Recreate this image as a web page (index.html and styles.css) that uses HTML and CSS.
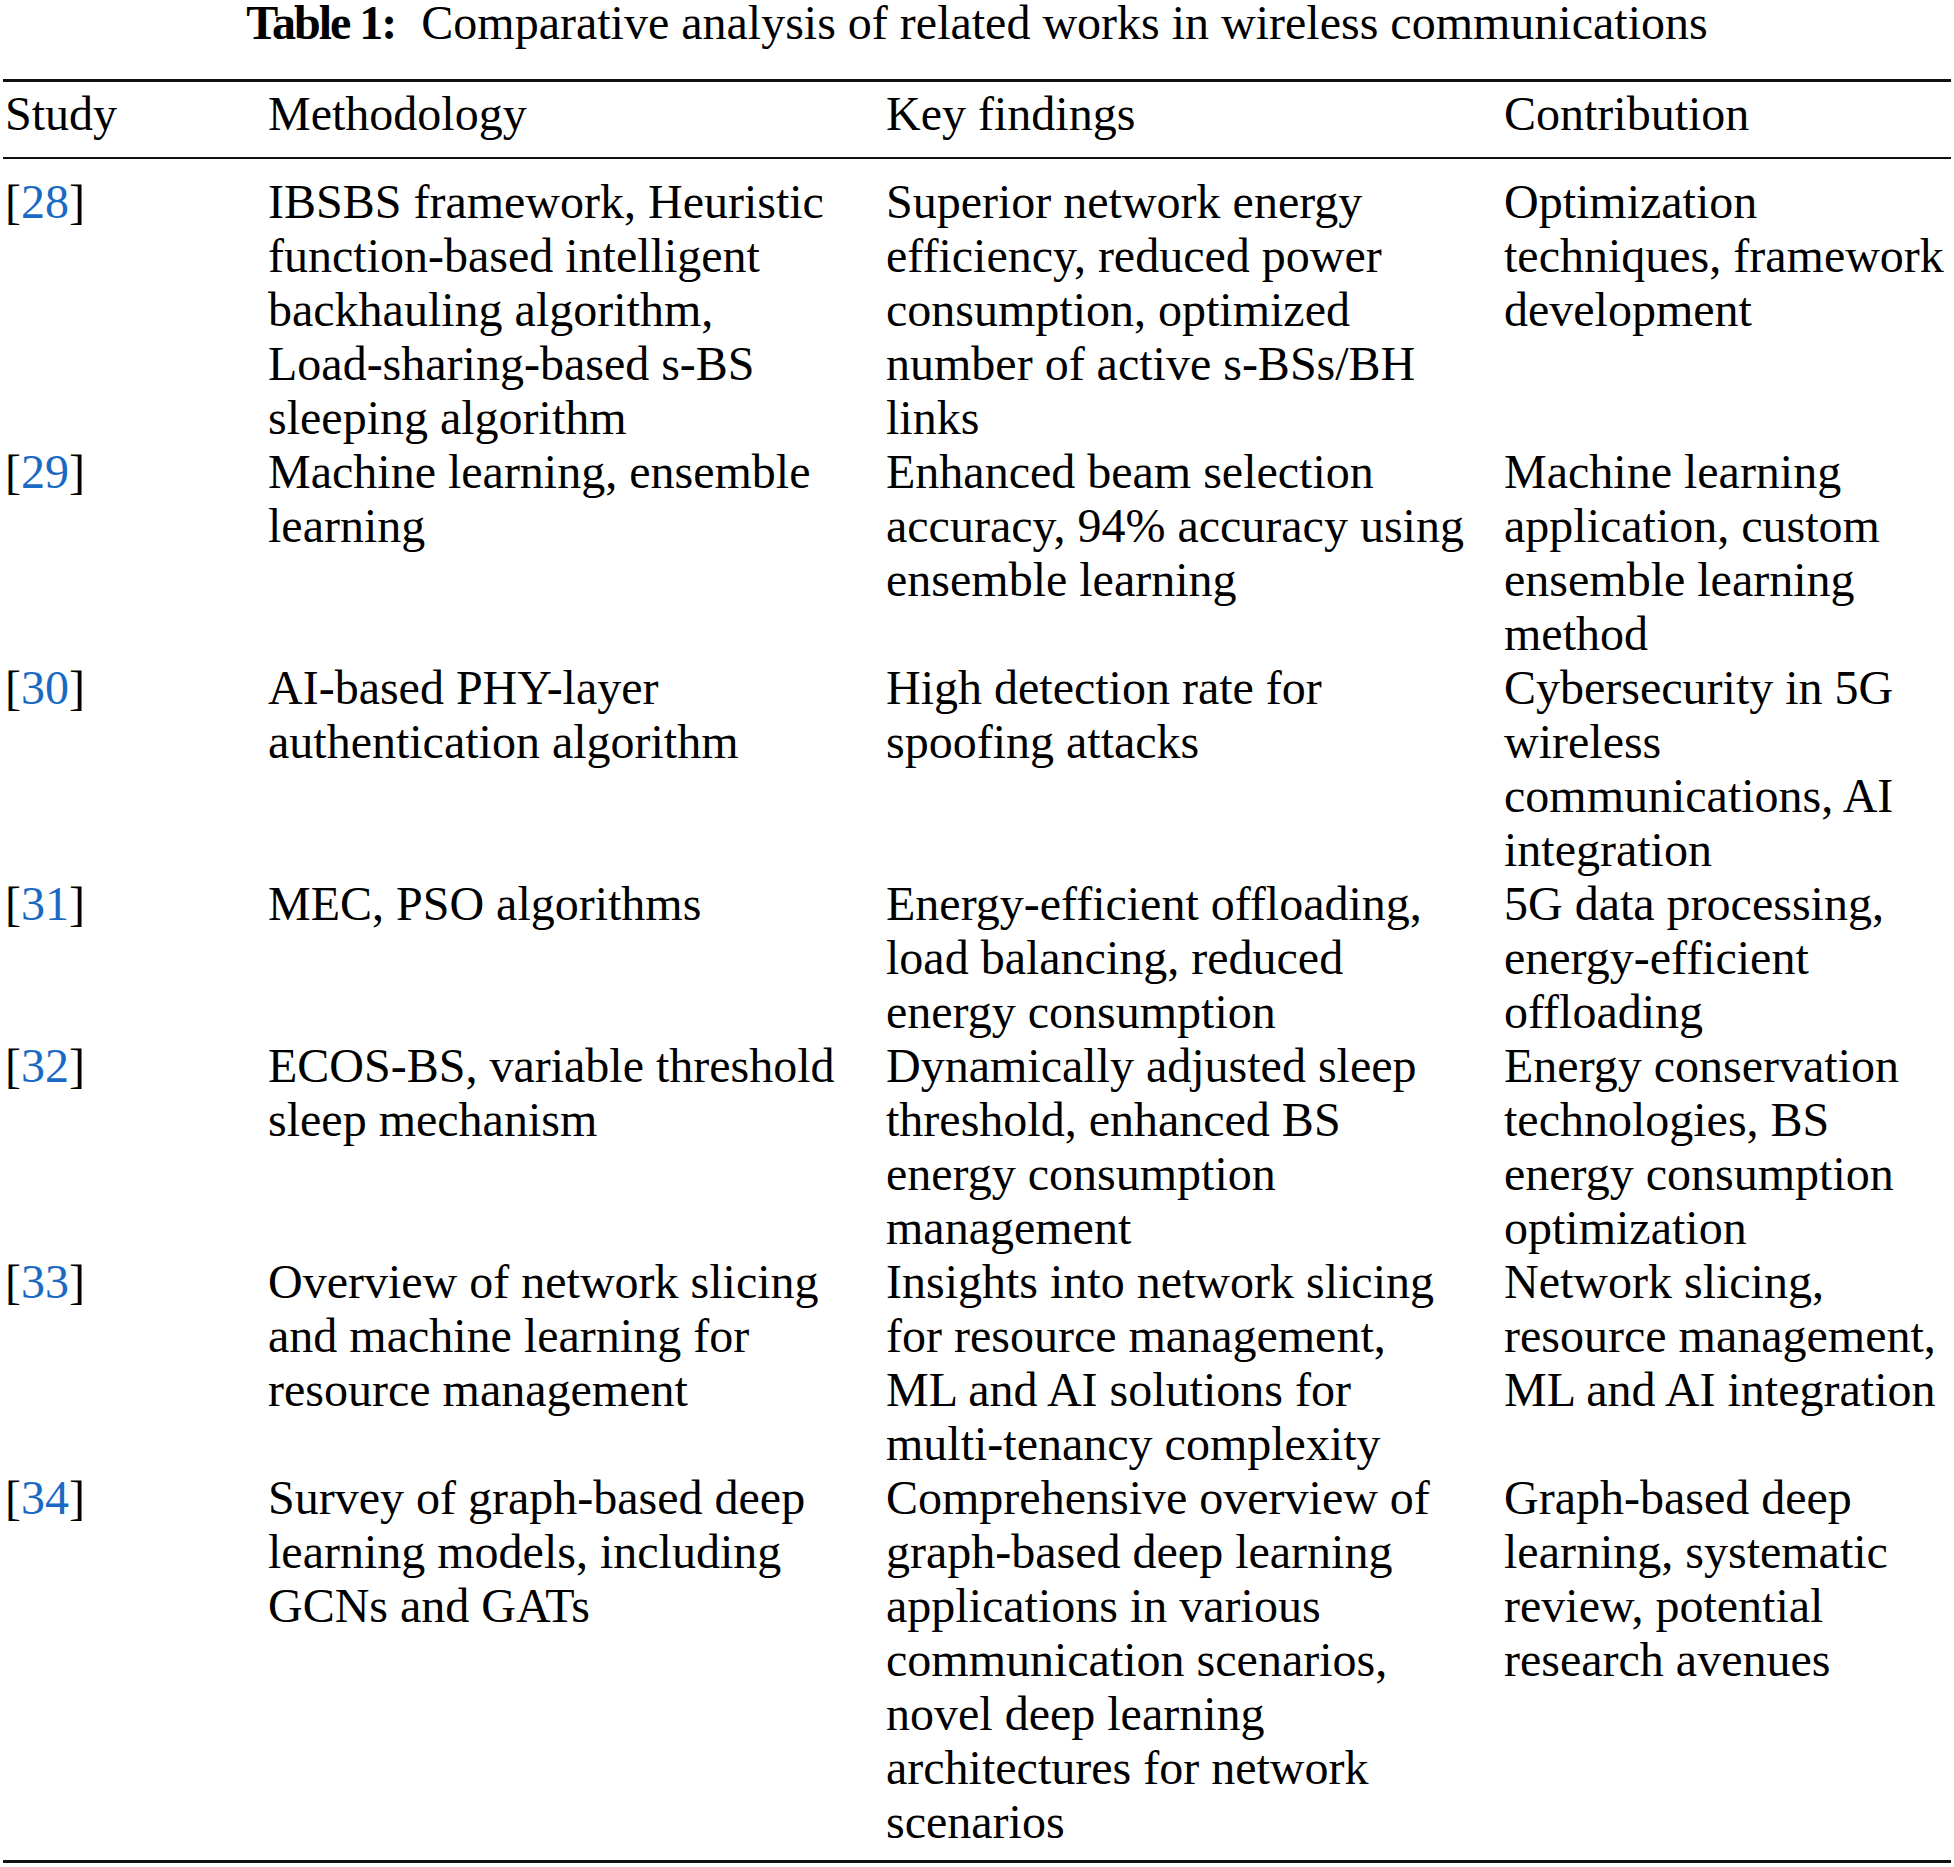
FILE: index.html
```html
<!DOCTYPE html>
<html lang="en">
<head>
<meta charset="utf-8">
<title>Table 1: Comparative analysis of related works in wireless communications</title>
<link rel="stylesheet" href="styles.css">
</head>
<body>
<table class="cmp">
  <caption class="cap"><span class="cap-label">Table 1:</span> Comparative analysis of related works in wireless communications</caption>
  <colgroup>
    <col class="c-study">
    <col class="c-method">
    <col class="c-find">
    <col class="c-contrib">
  </colgroup>
  <thead>
    <tr>
      <th>Study</th>
      <th>Methodology</th>
      <th>Key findings</th>
      <th>Contribution</th>
    </tr>
  </thead>
  <tbody>
    <tr>
      <td>[<a class="ref" href="#r28">28</a>]</td>
      <td>IBSBS framework, Heuristic function-based intelligent backhauling algorithm, <span class="nw">Load-sharing-based</span> s-BS sleeping algorithm</td>
      <td>Superior network energy efficiency, reduced power consumption, optimized number of active s-BSs/BH links</td>
      <td>Optimization techniques, framework development</td>
    </tr>
    <tr>
      <td>[<a class="ref" href="#r29">29</a>]</td>
      <td>Machine learning, ensemble learning</td>
      <td>Enhanced beam selection accuracy, 94% accuracy using ensemble learning</td>
      <td>Machine learning application, custom ensemble learning method</td>
    </tr>
    <tr>
      <td>[<a class="ref" href="#r30">30</a>]</td>
      <td>AI-based PHY-layer authentication algorithm</td>
      <td>High detection rate for spoofing attacks</td>
      <td>Cybersecurity in 5G wireless communications, AI integration</td>
    </tr>
    <tr>
      <td>[<a class="ref" href="#r31">31</a>]</td>
      <td>MEC, PSO algorithms</td>
      <td>Energy-efficient offloading, load balancing, reduced energy consumption</td>
      <td>5G data processing, energy-efficient offloading</td>
    </tr>
    <tr>
      <td>[<a class="ref" href="#r32">32</a>]</td>
      <td>ECOS-BS, variable threshold sleep mechanism</td>
      <td>Dynamically adjusted sleep threshold, enhanced BS energy consumption management</td>
      <td>Energy conservation technologies, BS energy consumption optimization</td>
    </tr>
    <tr>
      <td>[<a class="ref" href="#r33">33</a>]</td>
      <td>Overview of network slicing and machine learning for resource management</td>
      <td>Insights into network slicing for resource management, ML and AI solutions for multi-tenancy complexity</td>
      <td>Network slicing, resource management, ML and AI integration</td>
    </tr>
    <tr>
      <td>[<a class="ref" href="#r34">34</a>]</td>
      <td>Survey of graph-based deep learning models, including GCNs and GATs</td>
      <td>Comprehensive overview of graph-based deep learning applications in various communication scenarios, novel deep learning architectures for network scenarios</td>
      <td>Graph-based deep learning, systematic review, potential research avenues</td>
    </tr>
  </tbody>
</table>
</body>
</html>
```

FILE: styles.css
```css
html, body {
  margin: 0;
  padding: 0;
  background: #ffffff;
}

body {
  font-family: "Liberation Serif", "Times New Roman", serif;
  color: #000000;
  font-size: 48px;
}

.cmp {
  width: 1948px;
  margin: 0 3px;
  border-collapse: separate;
  border-spacing: 0;
  table-layout: fixed;
}

.cap {
  caption-side: top;
  text-align: center;
  font-size: 48px;
  line-height: 46px;
  padding: 0 0 33px 0;
  white-space: nowrap;
}

.cap-label {
  font-weight: bold;
  letter-spacing: -2px;
  margin-right: 14px;
}

.c-study { width: 265px; }
.c-method { width: 618px; }
.c-find { width: 618px; }
.c-contrib { width: 447px; }

.cmp th,
.cmp td {
  text-align: left;
  vertical-align: top;
  font-weight: normal;
  line-height: 54px;
  padding: 0;
}

.cmp th:first-child,
.cmp td:first-child {
  padding-left: 2px;
}

.cmp th:nth-child(2),
.cmp td:nth-child(2),
.cmp th:nth-child(3),
.cmp td:nth-child(3) {
  padding-right: 38px;
}

.cmp thead th {
  border-top: 3px solid #111111;
  border-bottom: 2px solid #111111;
  padding-top: 5px;
  padding-bottom: 16px;
}

.cmp tbody tr:first-child td {
  padding-top: 16px;
}

.cmp tbody tr:last-child td {
  padding-bottom: 11px;
  border-bottom: 3px solid #111111;
}

.nw {
  white-space: nowrap;
}

.ref {
  color: #1a6ac4;
  text-decoration: none;
}
```
